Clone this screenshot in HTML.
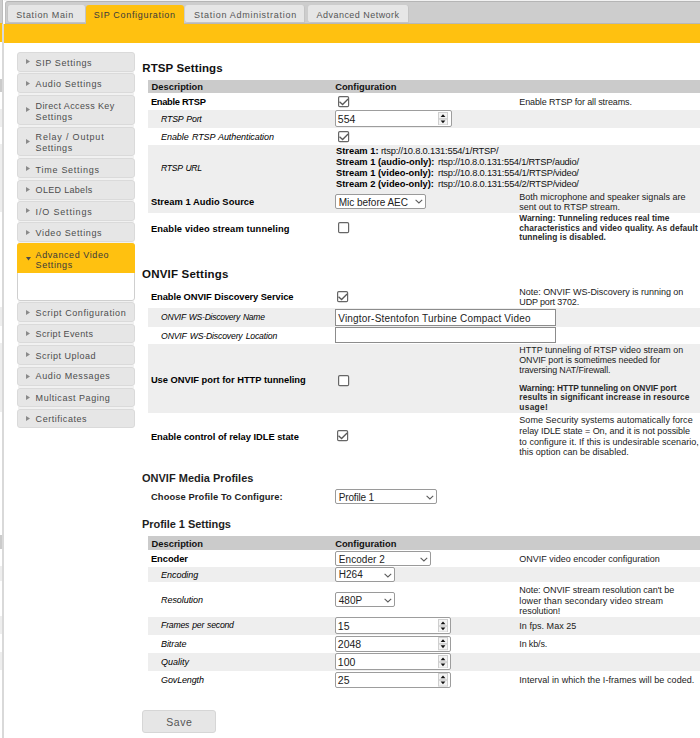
<!DOCTYPE html>
<html><head><meta charset="utf-8"><title>SIP Configuration</title>
<style>
html,body{margin:0;padding:0;}
body{width:700px;height:738px;overflow:hidden;position:relative;background:#fff;font-family:"Liberation Sans",sans-serif;}
.a{position:absolute;}
.t{white-space:nowrap;}
.b{font-weight:bold;}
.i{font-style:italic;}
</style></head><body>
<div class="a" style="left:0px;top:0px;width:2px;height:23px;background:#cdcdcd;"></div>
<div class="a" style="left:0px;top:23px;width:2px;height:19px;background:#FFC110;"></div>
<div class="a" style="left:3px;top:0px;width:697px;height:24px;background:#fff;"></div>
<div class="a" style="left:5px;top:1px;width:695px;height:23px;background:#cdcdcd;border-left:1px solid #bdbdbd;border-top:1px solid #b5b5b5;box-sizing:border-box;border-top-left-radius:3px;"></div>
<div class="a" style="left:4px;top:0px;width:696px;height:1px;background:#f2f2f2;"></div>
<div class="a" style="left:5px;top:23px;width:695px;height:1px;background:#b8b8b8;"></div>
<div class="a" style="left:4px;top:24px;width:696px;height:19px;background:#FFC110;"></div>
<div class="a" style="left:7px;top:5px;width:78.5px;height:18px;background:#e6e6e6;border-right:1px solid #c4c4c4;border-bottom:1px solid #c4c4c4;border-left:1px solid #c4c4c4;box-sizing:border-box;border-radius:3px 3px 0 3px;"></div>
<div class="a t" style="left:16.2px;top:11px;font-size:9px;line-height:9px;color:#555;letter-spacing:0.636px;">Station Main</div>
<div class="a" style="left:85.7px;top:5px;width:98.10000000000001px;height:19px;background:#FFC110;border-radius:3px 3px 0 0;"></div>
<div class="a t" style="left:93.8px;top:11px;font-size:9px;line-height:9px;color:#3a3a3a;letter-spacing:0.679px;">SIP Configuration</div>
<div class="a" style="left:185.2px;top:5px;width:119.90000000000003px;height:18px;background:#e6e6e6;border-right:1px solid #c4c4c4;border-bottom:1px solid #c4c4c4;box-sizing:border-box;border-radius:3px 3px 0 3px;"></div>
<div class="a t" style="left:194.1px;top:11px;font-size:9px;line-height:9px;color:#555;letter-spacing:0.714px;">Station Administration</div>
<div class="a" style="left:307.5px;top:5px;width:101.10000000000002px;height:18px;background:#e6e6e6;border-right:1px solid #c4c4c4;border-bottom:1px solid #c4c4c4;box-sizing:border-box;border-radius:3px 3px 0 3px;"></div>
<div class="a t" style="left:316.6px;top:11px;font-size:9px;line-height:9px;color:#555;letter-spacing:0.46px;">Advanced Network</div>
<div class="a" style="left:2px;top:0px;width:1px;height:24px;background:#bdbdbd;"></div>
<div class="a" style="left:2px;top:24px;width:2px;height:714px;background:#d9d9d9;"></div>
<div class="a" style="left:17px;top:51.5px;width:118.4px;height:20.2px;background:#e6e6e6;border:1px solid #dadada;box-sizing:border-box;border-radius:3px;"></div>
<svg class="a" style="left:26px;top:59.0px" width="4" height="5" viewBox="0 0 4 5"><path d="M0 0 L4 2.5 L0 5 Z" fill="#8a8a8a"/></svg>
<div class="a t" style="left:35.6px;top:59px;font-size:9px;line-height:9px;color:#4d4d4d;letter-spacing:0.605px;">SIP Settings</div>
<div class="a" style="left:17px;top:73.1px;width:118.4px;height:20.3px;background:#e6e6e6;border:1px solid #dadada;box-sizing:border-box;border-radius:3px;"></div>
<svg class="a" style="left:26px;top:80.7px" width="4" height="5" viewBox="0 0 4 5"><path d="M0 0 L4 2.5 L0 5 Z" fill="#8a8a8a"/></svg>
<div class="a t" style="left:35.6px;top:80px;font-size:9px;line-height:9px;color:#4d4d4d;letter-spacing:0.608px;">Audio Settings</div>
<div class="a" style="left:17px;top:94.9px;width:118.4px;height:29.7px;background:#e6e6e6;border:1px solid #dadada;box-sizing:border-box;border-radius:3px;"></div>
<svg class="a" style="left:26px;top:107.2px" width="4" height="5" viewBox="0 0 4 5"><path d="M0 0 L4 2.5 L0 5 Z" fill="#8a8a8a"/></svg>
<div class="a t" style="left:35.6px;top:102px;font-size:9px;line-height:9px;color:#4d4d4d;letter-spacing:0.381px;">Direct Access Key</div>
<div class="a t" style="left:35.6px;top:113px;font-size:9px;line-height:9px;color:#4d4d4d;letter-spacing:0.586px;">Settings</div>
<div class="a" style="left:17px;top:127.0px;width:118.4px;height:29.4px;background:#e6e6e6;border:1px solid #dadada;box-sizing:border-box;border-radius:3px;"></div>
<svg class="a" style="left:26px;top:139.1px" width="4" height="5" viewBox="0 0 4 5"><path d="M0 0 L4 2.5 L0 5 Z" fill="#8a8a8a"/></svg>
<div class="a t" style="left:35.6px;top:133px;font-size:9px;line-height:9px;color:#4d4d4d;letter-spacing:0.808px;">Relay / Output</div>
<div class="a t" style="left:35.6px;top:144px;font-size:9px;line-height:9px;color:#4d4d4d;letter-spacing:0.586px;">Settings</div>
<div class="a" style="left:17px;top:158.4px;width:118.4px;height:19.8px;background:#e6e6e6;border:1px solid #dadada;box-sizing:border-box;border-radius:3px;"></div>
<svg class="a" style="left:26px;top:165.7px" width="4" height="5" viewBox="0 0 4 5"><path d="M0 0 L4 2.5 L0 5 Z" fill="#8a8a8a"/></svg>
<div class="a t" style="left:35.6px;top:166px;font-size:9px;line-height:9px;color:#4d4d4d;letter-spacing:0.727px;">Time Settings</div>
<div class="a" style="left:17px;top:180.0px;width:118.4px;height:19.5px;background:#e6e6e6;border:1px solid #dadada;box-sizing:border-box;border-radius:3px;"></div>
<svg class="a" style="left:26px;top:187.2px" width="4" height="5" viewBox="0 0 4 5"><path d="M0 0 L4 2.5 L0 5 Z" fill="#8a8a8a"/></svg>
<div class="a t" style="left:35.6px;top:186px;font-size:9px;line-height:9px;color:#4d4d4d;letter-spacing:0.31px;">OLED Labels</div>
<div class="a" style="left:17px;top:201.0px;width:118.4px;height:19.6px;background:#e6e6e6;border:1px solid #dadada;box-sizing:border-box;border-radius:3px;"></div>
<svg class="a" style="left:26px;top:208.2px" width="4" height="5" viewBox="0 0 4 5"><path d="M0 0 L4 2.5 L0 5 Z" fill="#8a8a8a"/></svg>
<div class="a t" style="left:35.6px;top:208px;font-size:9px;line-height:9px;color:#4d4d4d;letter-spacing:0.827px;">I/O Settings</div>
<div class="a" style="left:17px;top:222.4px;width:118.4px;height:19.4px;background:#e6e6e6;border:1px solid #dadada;box-sizing:border-box;border-radius:3px;"></div>
<svg class="a" style="left:26px;top:229.5px" width="4" height="5" viewBox="0 0 4 5"><path d="M0 0 L4 2.5 L0 5 Z" fill="#8a8a8a"/></svg>
<div class="a t" style="left:35.6px;top:229px;font-size:9px;line-height:9px;color:#4d4d4d;letter-spacing:0.62px;">Video Settings</div>
<div class="a" style="left:17px;top:302.4px;width:118.4px;height:19.4px;background:#e6e6e6;border:1px solid #dadada;box-sizing:border-box;border-radius:3px;"></div>
<svg class="a" style="left:26px;top:309.5px" width="4" height="5" viewBox="0 0 4 5"><path d="M0 0 L4 2.5 L0 5 Z" fill="#8a8a8a"/></svg>
<div class="a t" style="left:35.6px;top:309px;font-size:9px;line-height:9px;color:#4d4d4d;letter-spacing:0.579px;">Script Configuration</div>
<div class="a" style="left:17px;top:323.8px;width:118.4px;height:19.4px;background:#e6e6e6;border:1px solid #dadada;box-sizing:border-box;border-radius:3px;"></div>
<svg class="a" style="left:26px;top:330.9px" width="4" height="5" viewBox="0 0 4 5"><path d="M0 0 L4 2.5 L0 5 Z" fill="#8a8a8a"/></svg>
<div class="a t" style="left:35.6px;top:330px;font-size:9px;line-height:9px;color:#4d4d4d;letter-spacing:0.358px;">Script Events</div>
<div class="a" style="left:17px;top:345.2px;width:118.4px;height:19.4px;background:#e6e6e6;border:1px solid #dadada;box-sizing:border-box;border-radius:3px;"></div>
<svg class="a" style="left:26px;top:352.3px" width="4" height="5" viewBox="0 0 4 5"><path d="M0 0 L4 2.5 L0 5 Z" fill="#8a8a8a"/></svg>
<div class="a t" style="left:35.6px;top:352px;font-size:9px;line-height:9px;color:#4d4d4d;letter-spacing:0.5px;">Script Upload</div>
<div class="a" style="left:17px;top:366.6px;width:118.4px;height:19.4px;background:#e6e6e6;border:1px solid #dadada;box-sizing:border-box;border-radius:3px;"></div>
<svg class="a" style="left:26px;top:373.7px" width="4" height="5" viewBox="0 0 4 5"><path d="M0 0 L4 2.5 L0 5 Z" fill="#8a8a8a"/></svg>
<div class="a t" style="left:35.6px;top:372px;font-size:9px;line-height:9px;color:#4d4d4d;letter-spacing:0.592px;">Audio Messages</div>
<div class="a" style="left:17px;top:387.8px;width:118.4px;height:19.4px;background:#e6e6e6;border:1px solid #dadada;box-sizing:border-box;border-radius:3px;"></div>
<svg class="a" style="left:26px;top:394.9px" width="4" height="5" viewBox="0 0 4 5"><path d="M0 0 L4 2.5 L0 5 Z" fill="#8a8a8a"/></svg>
<div class="a t" style="left:35.6px;top:394px;font-size:9px;line-height:9px;color:#4d4d4d;letter-spacing:0.547px;">Multicast Paging</div>
<div class="a" style="left:17px;top:409.0px;width:118.4px;height:19.4px;background:#e6e6e6;border:1px solid #dadada;box-sizing:border-box;border-radius:3px;"></div>
<svg class="a" style="left:26px;top:416.1px" width="4" height="5" viewBox="0 0 4 5"><path d="M0 0 L4 2.5 L0 5 Z" fill="#8a8a8a"/></svg>
<div class="a t" style="left:35.6px;top:415px;font-size:9px;line-height:9px;color:#4d4d4d;letter-spacing:0.536px;">Certificates</div>
<div class="a" style="left:18px;top:71.7px;width:116.4px;height:1.3999999999999915px;background:#f1f1f1;"></div>
<div class="a" style="left:18px;top:93.39999999999999px;width:116.4px;height:1.5000000000000142px;background:#f1f1f1;"></div>
<div class="a" style="left:18px;top:124.60000000000001px;width:116.4px;height:2.3999999999999915px;background:#f1f1f1;"></div>
<div class="a" style="left:18px;top:156.4px;width:116.4px;height:2.0px;background:#f1f1f1;"></div>
<div class="a" style="left:18px;top:178.20000000000002px;width:116.4px;height:1.799999999999983px;background:#f1f1f1;"></div>
<div class="a" style="left:18px;top:199.5px;width:116.4px;height:1.5px;background:#f1f1f1;"></div>
<div class="a" style="left:18px;top:220.6px;width:116.4px;height:1.8000000000000114px;background:#f1f1f1;"></div>
<div class="a" style="left:18px;top:241.8px;width:116.4px;height:1.3999999999999773px;background:#f1f1f1;"></div>
<div class="a" style="left:18px;top:301.2px;width:116.4px;height:1.1999999999999886px;background:#f1f1f1;"></div>
<div class="a" style="left:18px;top:321.79999999999995px;width:116.4px;height:2.000000000000057px;background:#f1f1f1;"></div>
<div class="a" style="left:18px;top:343.2px;width:116.4px;height:2.0px;background:#f1f1f1;"></div>
<div class="a" style="left:18px;top:364.59999999999997px;width:116.4px;height:2.000000000000057px;background:#f1f1f1;"></div>
<div class="a" style="left:18px;top:386.0px;width:116.4px;height:1.8000000000000114px;background:#f1f1f1;"></div>
<div class="a" style="left:18px;top:407.2px;width:116.4px;height:1.8000000000000114px;background:#f1f1f1;"></div>
<div class="a" style="left:16.7px;top:243.2px;width:118.7px;height:58px;background:#fff;border:1px solid #cfcfcf;box-sizing:border-box;border-radius:3px;"></div>
<div class="a" style="left:16.7px;top:243.2px;width:118.7px;height:29.9px;background:#FFC110;border-radius:3px 3px 0 0;"></div>
<svg class="a" style="left:26px;top:257px" width="5" height="3.5" viewBox="0 0 5 3.5"><path d="M0 0 L5 0 L2.5 3.5 Z" fill="#4a4a4a"/></svg>
<div class="a t" style="left:35.6px;top:251px;font-size:9px;line-height:9px;color:#3a3a3a;letter-spacing:0.581px;">Advanced Video</div>
<div class="a t" style="left:35.6px;top:261px;font-size:9px;line-height:9px;color:#3a3a3a;letter-spacing:0.586px;">Settings</div>
<div class="a t b" style="left:142.3px;top:63px;font-size:11.5px;line-height:11.5px;color:#111;letter-spacing:0.106px;">RTSP Settings</div>
<div class="a" style="left:148px;top:80px;width:560px;height:13px;background:#cbcbcb;"></div>
<div class="a" style="left:0px;top:79px;width:2px;height:13px;background:#cbcbcb;"></div>
<div class="a t b" style="left:151.6px;top:83px;font-size:9.33px;line-height:9.33px;color:#111;letter-spacing:0.007px;">Description</div>
<div class="a t b" style="left:335.2px;top:83px;font-size:9.33px;line-height:9.33px;color:#111;">Configuration</div>
<div class="a t b" style="left:150.9px;top:98px;font-size:9.33px;line-height:9.33px;color:#000;letter-spacing:-0.306px;">Enable RTSP</div>
<svg class="a" style="left:338px;top:96px" width="12" height="12" viewBox="0 0 12 12"><rect x="0.6" y="0.6" width="10" height="10" rx="1.2" fill="#fff" stroke="#666" stroke-width="1.2"/><path d="M1.5 5.8 L4.6 8.5 L10.1 3" fill="none" stroke="#595959" stroke-width="1.35"/></svg>
<div class="a t" style="left:519.3px;top:98px;font-size:9px;line-height:9px;color:#1a1a1a;letter-spacing:-0.114px;">Enable RTSP for all streams.</div>
<div class="a" style="left:148px;top:110px;width:560px;height:17.599999999999994px;background:#eeeeee;"></div>
<div class="a" style="left:0px;top:109px;width:2px;height:17.599999999999994px;background:#eeeeee;"></div>
<div class="a t i" style="left:161.1px;top:115px;font-size:8.77px;line-height:8.77px;color:#000;letter-spacing:-0.201px;word-spacing:0.9px;">RTSP Port</div>
<div class="a" style="left:335.2px;top:110.4px;width:116.4px;height:16.4px;background:#fff;border:1px solid #9d9d9d;box-sizing:border-box;border-radius:2px;"></div>
<div class="a t" style="left:337.8px;top:114px;font-size:10.5px;line-height:10.5px;color:#1a1a1a;">554</div>
<svg class="a" style="left:438.2px;top:111.9px" width="10" height="13.4" viewBox="0 0 10 13.40"><rect x="0.5" y="0.5" width="9" height="6.20" fill="#f3f3f3" stroke="#cfcfcf" stroke-width="1"/><rect x="0.5" y="7.20" width="9" height="5.70" fill="#f3f3f3" stroke="#cfcfcf" stroke-width="1"/><path d="M2.6 5.10 L5 2.30 L7.4 5.10 Z" fill="#111"/><path d="M2.6 8.40 L5 11.20 L7.4 8.40 Z" fill="#111"/></svg>
<div class="a t i" style="left:161.1px;top:133px;font-size:9px;line-height:9px;color:#000;letter-spacing:-0.088px;word-spacing:0.9px;">Enable RTSP Authentication</div>
<svg class="a" style="left:338px;top:131px" width="12" height="12" viewBox="0 0 12 12"><rect x="0.6" y="0.6" width="10" height="10" rx="1.2" fill="#fff" stroke="#666" stroke-width="1.2"/><path d="M1.5 5.8 L4.6 8.5 L10.1 3" fill="none" stroke="#595959" stroke-width="1.35"/></svg>
<div class="a" style="left:148px;top:145px;width:560px;height:67.5px;background:#eeeeee;"></div>
<div class="a" style="left:0px;top:144px;width:2px;height:67.5px;background:#eeeeee;"></div>
<div class="a t i" style="left:161.1px;top:164px;font-size:8.62px;line-height:8.62px;color:#000;letter-spacing:-0.289px;word-spacing:0.9px;">RTSP URL</div>
<div class="a t b" style="left:336px;top:147px;font-size:9.33px;line-height:9.33px;color:#000;">Stream 1:</div>
<div class="a t" style="left:380.9px;top:147px;font-size:9.33px;line-height:9.33px;color:#111;letter-spacing:-0.195px;">rtsp://10.8.0.131:554/1/RTSP/</div>
<div class="a t b" style="left:336px;top:158px;font-size:9.33px;line-height:9.33px;color:#000;">Stream 1 (audio-only):</div>
<div class="a t" style="left:438px;top:158px;font-size:9.33px;line-height:9.33px;color:#111;letter-spacing:-0.226px;">rtsp://10.8.0.131:554/1/RTSP/audio/</div>
<div class="a t b" style="left:336px;top:169px;font-size:9.33px;line-height:9.33px;color:#000;">Stream 1 (video-only):</div>
<div class="a t" style="left:438px;top:169px;font-size:9.33px;line-height:9.33px;color:#111;letter-spacing:-0.211px;">rtsp://10.8.0.131:554/1/RTSP/video/</div>
<div class="a t b" style="left:336px;top:180px;font-size:9.33px;line-height:9.33px;color:#000;">Stream 2 (video-only):</div>
<div class="a t" style="left:438px;top:180px;font-size:9.33px;line-height:9.33px;color:#111;letter-spacing:-0.211px;">rtsp://10.8.0.131:554/2/RTSP/video/</div>
<div class="a t b" style="left:150.9px;top:198px;font-size:9.33px;line-height:9.33px;color:#000;letter-spacing:0.054px;">Stream 1 Audio Source</div>
<div class="a" style="left:335.2px;top:193.6px;width:91.2px;height:15px;background:#fff;border:1px solid #9a9a9a;box-sizing:border-box;border-radius:2px;"></div>
<div class="a t" style="left:338.8px;top:198px;font-size:10px;line-height:10px;color:#222;letter-spacing:-0.022px;">Mic before AEC</div>
<svg class="a" style="left:415.4px;top:199.3px" width="8" height="5" viewBox="0 0 8 5"><path d="M0.6 0.9 L3.9 4 L7.2 0.9" fill="none" stroke="#5a5a5a" stroke-width="1.05"/></svg>
<div class="a t" style="left:519.3px;top:193px;font-size:9px;line-height:9px;color:#1a1a1a;">Both microphone and speaker signals are</div>
<div class="a t" style="left:519.3px;top:203px;font-size:9px;line-height:9px;color:#1a1a1a;">sent out to RTSP stream.</div>
<div class="a t b" style="left:150.9px;top:225px;font-size:9.33px;line-height:9.33px;color:#000;letter-spacing:0.116px;">Enable video stream tunneling</div>
<svg class="a" style="left:338px;top:222px" width="12" height="12" viewBox="0 0 12 12"><rect x="0.6" y="0.6" width="10" height="10" rx="1.2" fill="#fff" stroke="#666" stroke-width="1.2"/></svg>
<div class="a t b" style="left:519.3px;top:214px;font-size:8.4px;line-height:8.4px;color:#2a2a2a;letter-spacing:0.031px;">Warning: Tunneling reduces real time</div>
<div class="a t b" style="left:519.3px;top:224px;font-size:8.4px;line-height:8.4px;color:#2a2a2a;letter-spacing:0.099px;">characteristics and video quality. As default</div>
<div class="a t b" style="left:519.3px;top:233px;font-size:8.4px;line-height:8.4px;color:#2a2a2a;letter-spacing:0.049px;">tunneling is disabled.</div>
<div class="a t b" style="left:142px;top:269px;font-size:11.5px;line-height:11.5px;color:#111;letter-spacing:0.209px;">ONVIF Settings</div>
<div class="a t b" style="left:150.9px;top:293px;font-size:9.33px;line-height:9.33px;color:#000;letter-spacing:-0.071px;">Enable ONVIF Discovery Service</div>
<svg class="a" style="left:337px;top:291px" width="12" height="12" viewBox="0 0 12 12"><rect x="0.6" y="0.6" width="10" height="10" rx="1.2" fill="#fff" stroke="#666" stroke-width="1.2"/><path d="M1.5 5.8 L4.6 8.5 L10.1 3" fill="none" stroke="#595959" stroke-width="1.35"/></svg>
<div class="a t" style="left:519.3px;top:288px;font-size:9px;line-height:9px;color:#1a1a1a;letter-spacing:-0.027px;">Note: ONVIF WS-Discovery is running on</div>
<div class="a t" style="left:519.3px;top:298px;font-size:9px;line-height:9px;color:#1a1a1a;letter-spacing:-0.157px;">UDP port 3702.</div>
<div class="a" style="left:148px;top:308.3px;width:560px;height:18.30000000000001px;background:#eeeeee;"></div>
<div class="a" style="left:0px;top:307.3px;width:2px;height:18.30000000000001px;background:#eeeeee;"></div>
<div class="a t i" style="left:161.1px;top:313px;font-size:8.54px;line-height:8.54px;color:#000;letter-spacing:-0.244px;word-spacing:0.9px;">ONVIF WS-Discovery Name</div>
<div class="a" style="left:335.2px;top:309.2px;width:220.4px;height:16.6px;background:#fff;border:1px solid #8c8c8c;box-sizing:border-box;"></div>
<div class="a t" style="left:338.2px;top:314px;font-size:10px;line-height:10px;color:#222;letter-spacing:0.201px;">Vingtor-Stentofon Turbine Compact Video</div>
<div class="a t i" style="left:161.1px;top:332px;font-size:8.69px;line-height:8.69px;color:#000;letter-spacing:-0.175px;word-spacing:0.9px;">ONVIF WS-Discovery Location</div>
<div class="a" style="left:335.2px;top:326.8px;width:220.4px;height:16.2px;background:#fff;border:1px solid #8c8c8c;box-sizing:border-box;"></div>
<div class="a" style="left:148px;top:344px;width:560px;height:69.30000000000001px;background:#eeeeee;"></div>
<div class="a" style="left:0px;top:343px;width:2px;height:69.30000000000001px;background:#eeeeee;"></div>
<div class="a t b" style="left:150.9px;top:376px;font-size:9.33px;line-height:9.33px;color:#000;letter-spacing:-0.014px;">Use ONVIF port for HTTP tunneling</div>
<svg class="a" style="left:338px;top:375px" width="12" height="12" viewBox="0 0 12 12"><rect x="0.6" y="0.6" width="10" height="10" rx="1.2" fill="#fff" stroke="#666" stroke-width="1.2"/></svg>
<div class="a t" style="left:519.3px;top:346px;font-size:8.9px;line-height:8.9px;color:#1a1a1a;letter-spacing:0.027px;">HTTP tunneling of RTSP video stream on</div>
<div class="a t" style="left:519.3px;top:356px;font-size:8.9px;line-height:8.9px;color:#1a1a1a;letter-spacing:-0.097px;">ONVIF port is sometimes needed for</div>
<div class="a t" style="left:519.3px;top:366px;font-size:8.9px;line-height:8.9px;color:#1a1a1a;letter-spacing:-0.124px;">traversing NAT/Firewall.</div>
<div class="a t b" style="left:519.3px;top:384px;font-size:8.4px;line-height:8.4px;color:#2a2a2a;letter-spacing:-0.055px;">Warning: HTTP tunneling on ONVIF port</div>
<div class="a t b" style="left:519.3px;top:393px;font-size:8.4px;line-height:8.4px;color:#2a2a2a;letter-spacing:0.119px;">results in significant increase in resource</div>
<div class="a t b" style="left:519.3px;top:403px;font-size:8.4px;line-height:8.4px;color:#2a2a2a;letter-spacing:0.287px;">usage!</div>
<div class="a t b" style="left:150.9px;top:433px;font-size:9.33px;line-height:9.33px;color:#000;letter-spacing:-0.025px;">Enable control of relay IDLE state</div>
<svg class="a" style="left:337px;top:430px" width="12" height="12" viewBox="0 0 12 12"><rect x="0.6" y="0.6" width="10" height="10" rx="1.2" fill="#fff" stroke="#666" stroke-width="1.2"/><path d="M1.5 5.8 L4.6 8.5 L10.1 3" fill="none" stroke="#595959" stroke-width="1.35"/></svg>
<div class="a t" style="left:519.3px;top:416px;font-size:9px;line-height:9px;color:#1a1a1a;letter-spacing:0.045px;">Some Security systems automatically force</div>
<div class="a t" style="left:519.3px;top:427px;font-size:9px;line-height:9px;color:#1a1a1a;letter-spacing:-0.049px;">relay IDLE state = On, and it is not possible</div>
<div class="a t" style="left:519.3px;top:438px;font-size:9px;line-height:9px;color:#1a1a1a;letter-spacing:0.04px;">to configure it. If this is undesirable scenario,</div>
<div class="a t" style="left:519.3px;top:448px;font-size:9px;line-height:9px;color:#1a1a1a;letter-spacing:0.011px;">this option can be disabled.</div>
<div class="a t b" style="left:142px;top:473px;font-size:11px;line-height:11px;color:#1e1e1e;letter-spacing:0.01px;">ONVIF Media Profiles</div>
<div class="a t b" style="left:151px;top:493px;font-size:9.33px;line-height:9.33px;color:#1e1e1e;letter-spacing:0.103px;">Choose Profile To Configure:</div>
<div class="a" style="left:335.2px;top:489.1px;width:101.8px;height:15.2px;background:#fff;border:1px solid #9a9a9a;box-sizing:border-box;border-radius:2px;"></div>
<div class="a t" style="left:338.8px;top:493px;font-size:10px;line-height:10px;color:#222;letter-spacing:-0.173px;">Profile 1</div>
<svg class="a" style="left:426.0px;top:494.9px" width="8" height="5" viewBox="0 0 8 5"><path d="M0.6 0.9 L3.9 4 L7.2 0.9" fill="none" stroke="#5a5a5a" stroke-width="1.05"/></svg>
<div class="a t b" style="left:142px;top:519px;font-size:11px;line-height:11px;color:#1e1e1e;letter-spacing:-0.053px;">Profile 1 Settings</div>
<div class="a" style="left:148px;top:536.1px;width:560px;height:13.600000000000023px;background:#cbcbcb;"></div>
<div class="a" style="left:0px;top:535.1px;width:2px;height:13.600000000000023px;background:#cbcbcb;"></div>
<div class="a t b" style="left:151.6px;top:540px;font-size:9.33px;line-height:9.33px;color:#111;letter-spacing:0.007px;">Description</div>
<div class="a t b" style="left:335.2px;top:540px;font-size:9.33px;line-height:9.33px;color:#111;">Configuration</div>
<div class="a t b" style="left:150.9px;top:555px;font-size:9.33px;line-height:9.33px;color:#000;letter-spacing:-0.038px;">Encoder</div>
<div class="a" style="left:335.2px;top:551.1px;width:96.2px;height:14.6px;background:#fff;border:1px solid #9a9a9a;box-sizing:border-box;border-radius:2px;"></div>
<div class="a t" style="left:338.8px;top:555px;font-size:10px;line-height:10px;color:#222;letter-spacing:0.051px;">Encoder 2</div>
<svg class="a" style="left:420.4px;top:556.6px" width="8" height="5" viewBox="0 0 8 5"><path d="M0.6 0.9 L3.9 4 L7.2 0.9" fill="none" stroke="#5a5a5a" stroke-width="1.05"/></svg>
<div class="a t" style="left:519.3px;top:555px;font-size:9px;line-height:9px;color:#1a1a1a;">ONVIF video encoder configuration</div>
<div class="a" style="left:148px;top:567px;width:560px;height:15.399999999999977px;background:#eeeeee;"></div>
<div class="a" style="left:0px;top:566px;width:2px;height:15.399999999999977px;background:#eeeeee;"></div>
<div class="a t i" style="left:161.1px;top:571px;font-size:9px;line-height:9px;color:#000;letter-spacing:-0.057px;word-spacing:0.9px;">Encoding</div>
<div class="a" style="left:335.2px;top:567px;width:59.4px;height:14.6px;background:#fff;border:1px solid #9a9a9a;box-sizing:border-box;border-radius:2px;"></div>
<div class="a t" style="left:338.8px;top:570px;font-size:10px;line-height:10px;color:#222;">H264</div>
<svg class="a" style="left:383.6px;top:572.5px" width="8" height="5" viewBox="0 0 8 5"><path d="M0.6 0.9 L3.9 4 L7.2 0.9" fill="none" stroke="#5a5a5a" stroke-width="1.05"/></svg>
<div class="a t i" style="left:161.1px;top:596px;font-size:9px;line-height:9px;color:#000;letter-spacing:-0.078px;word-spacing:0.9px;">Resolution</div>
<div class="a" style="left:335.2px;top:592.4px;width:59.4px;height:14.4px;background:#fff;border:1px solid #9a9a9a;box-sizing:border-box;border-radius:2px;"></div>
<div class="a t" style="left:338.8px;top:596px;font-size:10px;line-height:10px;color:#222;">480P</div>
<svg class="a" style="left:383.6px;top:597.8px" width="8" height="5" viewBox="0 0 8 5"><path d="M0.6 0.9 L3.9 4 L7.2 0.9" fill="none" stroke="#5a5a5a" stroke-width="1.05"/></svg>
<div class="a t" style="left:519.3px;top:586px;font-size:9px;line-height:9px;color:#1a1a1a;letter-spacing:-0.052px;">Note: ONVIF stream resolution can&#x27;t be</div>
<div class="a t" style="left:519.3px;top:597px;font-size:9px;line-height:9px;color:#1a1a1a;letter-spacing:0.128px;">lower than secondary video stream</div>
<div class="a t" style="left:519.3px;top:607px;font-size:9px;line-height:9px;color:#1a1a1a;letter-spacing:-0.05px;">resolution!</div>
<div class="a" style="left:148px;top:616.8px;width:560px;height:18.200000000000045px;background:#eeeeee;"></div>
<div class="a" style="left:0px;top:615.8px;width:2px;height:18.200000000000045px;background:#eeeeee;"></div>
<div class="a t i" style="left:161.1px;top:621px;font-size:8.67px;line-height:8.67px;color:#000;letter-spacing:-0.221px;word-spacing:0.9px;">Frames per second</div>
<div class="a" style="left:335.2px;top:617.2px;width:116.2px;height:16.6px;background:#fff;border:1px solid #9d9d9d;box-sizing:border-box;border-radius:2px;"></div>
<div class="a t" style="left:337.8px;top:621px;font-size:10.5px;line-height:10.5px;color:#1a1a1a;">15</div>
<svg class="a" style="left:438.0px;top:618.7px" width="10" height="13.6" viewBox="0 0 10 13.60"><rect x="0.5" y="0.5" width="9" height="6.30" fill="#f3f3f3" stroke="#cfcfcf" stroke-width="1"/><rect x="0.5" y="7.30" width="9" height="5.80" fill="#f3f3f3" stroke="#cfcfcf" stroke-width="1"/><path d="M2.6 5.20 L5 2.40 L7.4 5.20 Z" fill="#111"/><path d="M2.6 8.50 L5 11.30 L7.4 8.50 Z" fill="#111"/></svg>
<div class="a t" style="left:519.3px;top:622px;font-size:9px;line-height:9px;color:#1a1a1a;letter-spacing:0.038px;">In fps. Max 25</div>
<div class="a t i" style="left:161.1px;top:640px;font-size:9px;line-height:9px;color:#000;letter-spacing:-0.117px;word-spacing:0.9px;">Bitrate</div>
<div class="a" style="left:335.2px;top:635.8px;width:116.2px;height:16.3px;background:#fff;border:1px solid #9d9d9d;box-sizing:border-box;border-radius:2px;"></div>
<div class="a t" style="left:337.8px;top:639px;font-size:10.5px;line-height:10.5px;color:#1a1a1a;">2048</div>
<svg class="a" style="left:438.0px;top:637.3px" width="10" height="13.3" viewBox="0 0 10 13.30"><rect x="0.5" y="0.5" width="9" height="6.15" fill="#f3f3f3" stroke="#cfcfcf" stroke-width="1"/><rect x="0.5" y="7.15" width="9" height="5.65" fill="#f3f3f3" stroke="#cfcfcf" stroke-width="1"/><path d="M2.6 5.05 L5 2.25 L7.4 5.05 Z" fill="#111"/><path d="M2.6 8.35 L5 11.15 L7.4 8.35 Z" fill="#111"/></svg>
<div class="a t" style="left:519.3px;top:640px;font-size:9px;line-height:9px;color:#1a1a1a;letter-spacing:-0.143px;">In kb/s.</div>
<div class="a" style="left:148px;top:652.5px;width:560px;height:18.299999999999955px;background:#eeeeee;"></div>
<div class="a" style="left:0px;top:651.5px;width:2px;height:18.299999999999955px;background:#eeeeee;"></div>
<div class="a t i" style="left:161.1px;top:658px;font-size:9px;line-height:9px;color:#000;">Quality</div>
<div class="a" style="left:335.2px;top:653.3px;width:116.2px;height:16.6px;background:#fff;border:1px solid #9d9d9d;box-sizing:border-box;border-radius:2px;"></div>
<div class="a t" style="left:337.8px;top:657px;font-size:10.5px;line-height:10.5px;color:#1a1a1a;">100</div>
<svg class="a" style="left:438.0px;top:654.8px" width="10" height="13.6" viewBox="0 0 10 13.60"><rect x="0.5" y="0.5" width="9" height="6.30" fill="#f3f3f3" stroke="#cfcfcf" stroke-width="1"/><rect x="0.5" y="7.30" width="9" height="5.80" fill="#f3f3f3" stroke="#cfcfcf" stroke-width="1"/><path d="M2.6 5.20 L5 2.40 L7.4 5.20 Z" fill="#111"/><path d="M2.6 8.50 L5 11.30 L7.4 8.50 Z" fill="#111"/></svg>
<div class="a t i" style="left:161.1px;top:676px;font-size:9px;line-height:9px;color:#000;letter-spacing:-0.15px;word-spacing:0.9px;">GovLength</div>
<div class="a" style="left:335.2px;top:671.6px;width:116.2px;height:16.6px;background:#fff;border:1px solid #9d9d9d;box-sizing:border-box;border-radius:2px;"></div>
<div class="a t" style="left:337.8px;top:675px;font-size:10.5px;line-height:10.5px;color:#1a1a1a;">25</div>
<svg class="a" style="left:438.0px;top:673.1px" width="10" height="13.6" viewBox="0 0 10 13.60"><rect x="0.5" y="0.5" width="9" height="6.30" fill="#f3f3f3" stroke="#cfcfcf" stroke-width="1"/><rect x="0.5" y="7.30" width="9" height="5.80" fill="#f3f3f3" stroke="#cfcfcf" stroke-width="1"/><path d="M2.6 5.20 L5 2.40 L7.4 5.20 Z" fill="#111"/><path d="M2.6 8.50 L5 11.30 L7.4 8.50 Z" fill="#111"/></svg>
<div class="a t" style="left:519.3px;top:676px;font-size:9px;line-height:9px;color:#1a1a1a;letter-spacing:0.068px;">Interval in which the I-frames will be coded.</div>
<div class="a" style="left:142.4px;top:710.4px;width:73.4px;height:22.6px;background:#e6e6e6;border:1px solid #d6d6d6;box-sizing:border-box;border-radius:3px;"></div>
<div class="a t" style="left:166.2px;top:717px;font-size:10.5px;line-height:10.5px;color:#555;letter-spacing:0.554px;">Save</div>
</body></html>
